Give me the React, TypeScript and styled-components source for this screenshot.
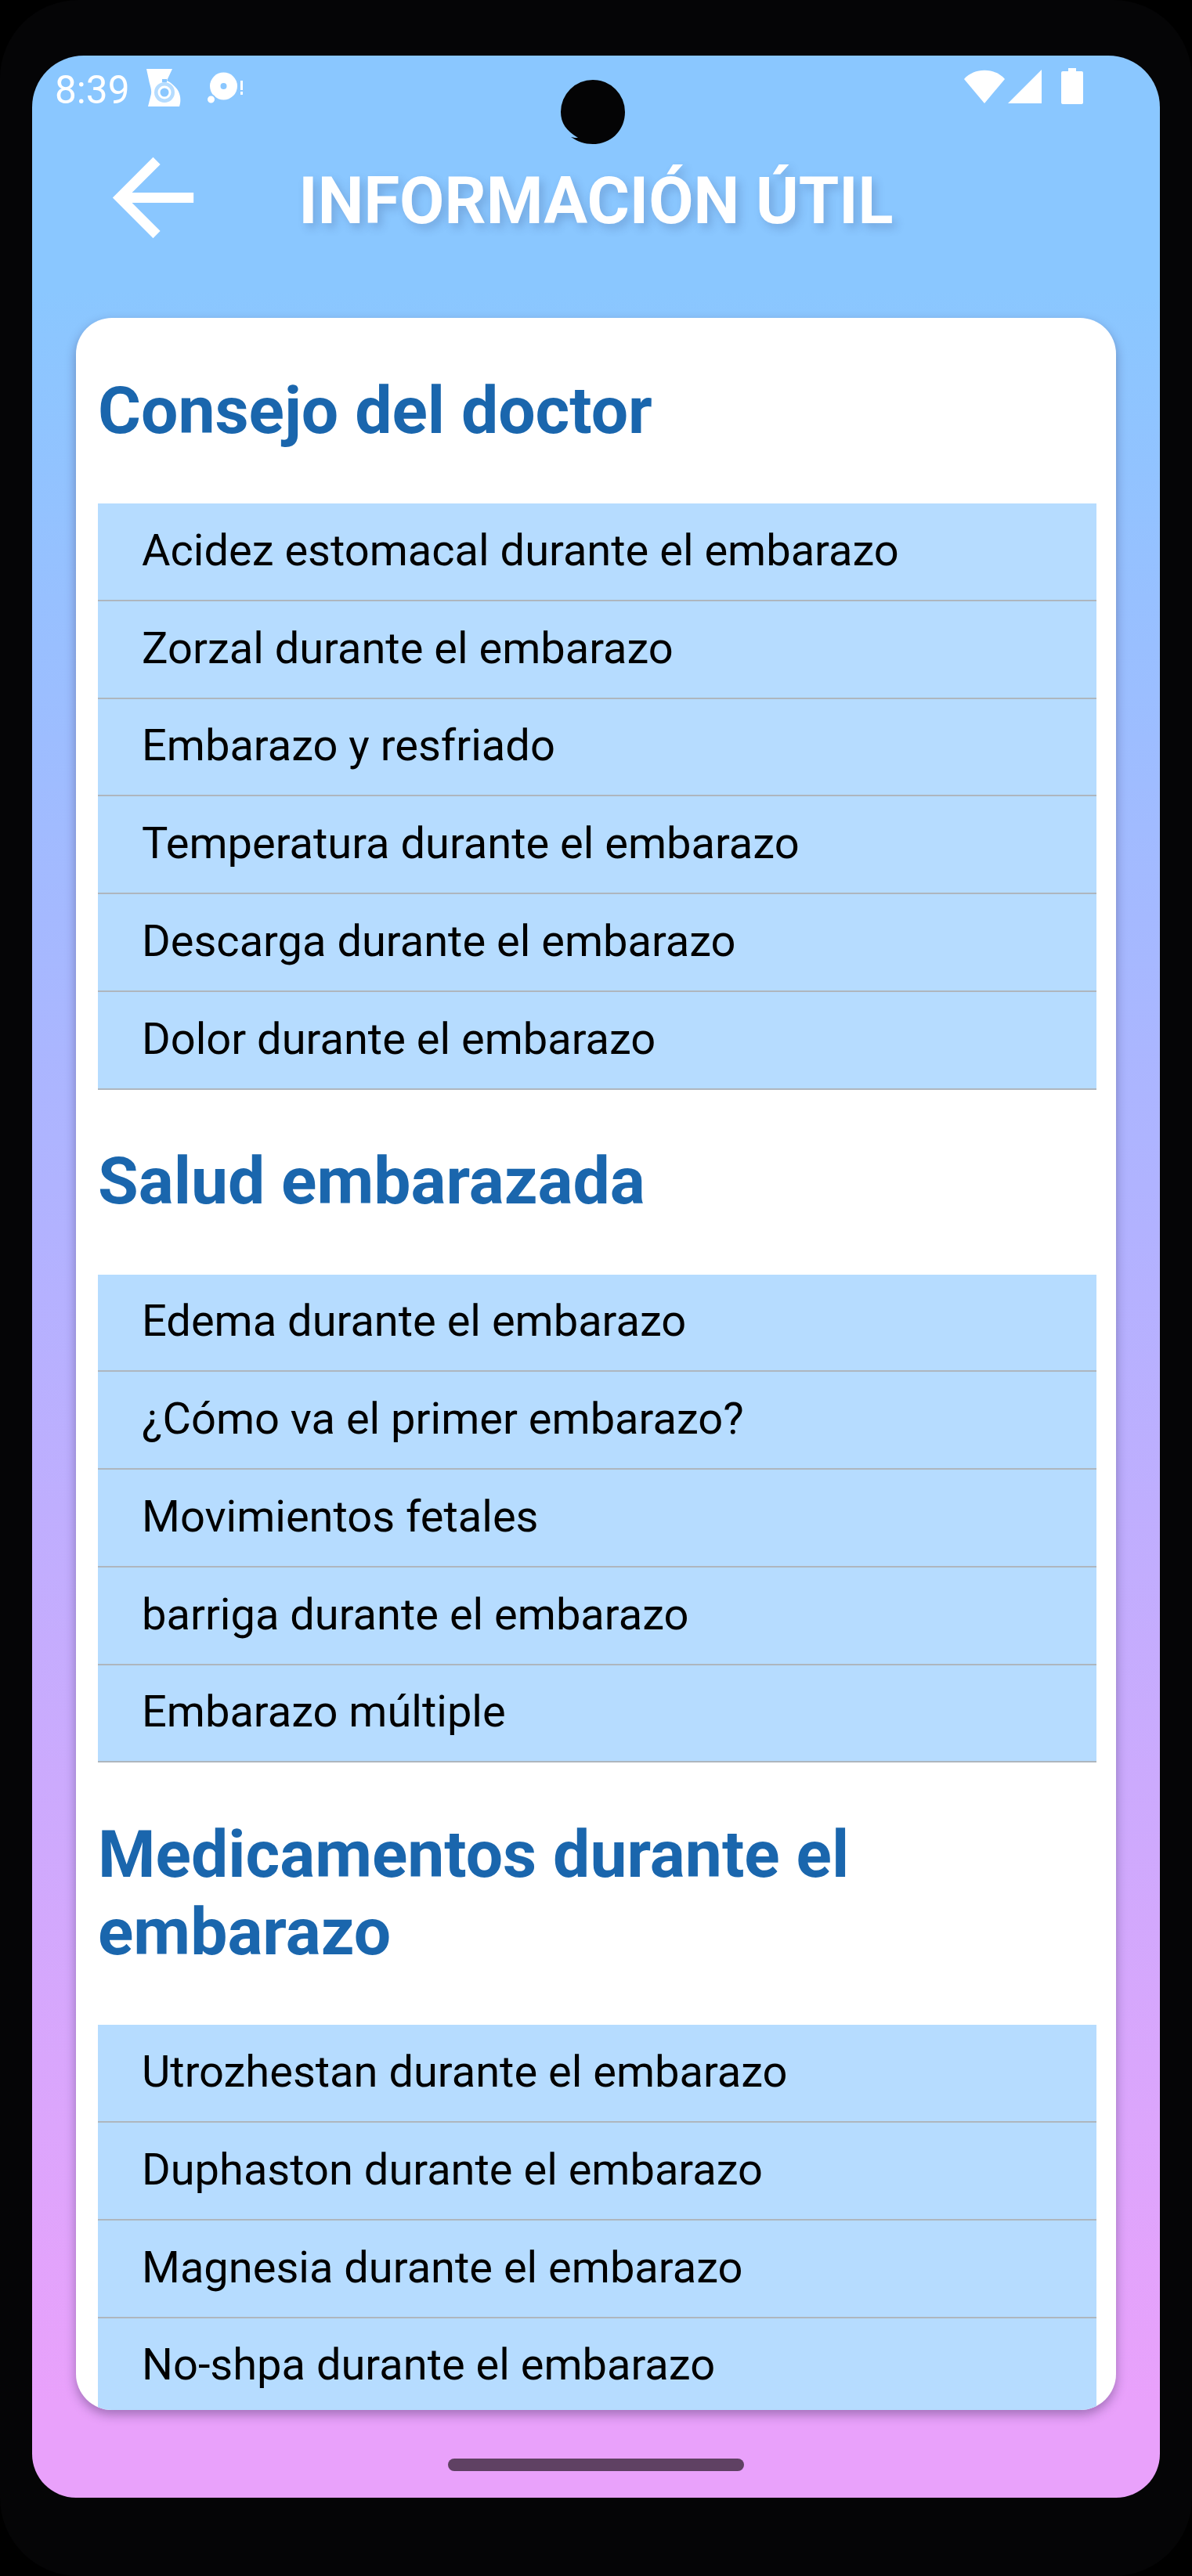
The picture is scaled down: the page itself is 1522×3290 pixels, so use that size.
import React from "react";
import styled, { createGlobalStyle } from "styled-components";

const sections = [
  {
    title: "Consejo del doctor",
    items: [
      "Acidez estomacal durante el embarazo",
      "Zorzal durante el embarazo",
      "Embarazo y resfriado",
      "Temperatura durante el embarazo",
      "Descarga durante el embarazo",
      "Dolor durante el embarazo",
    ],
  },
  {
    title: "Salud embarazada",
    items: [
      "Edema durante el embarazo",
      "¿Cómo va el primer embarazo?",
      "Movimientos fetales",
      "barriga durante el embarazo",
      "Embarazo múltiple",
    ],
  },
  {
    title: "Medicamentos durante el embarazo",
    items: [
      "Utrozhestan durante el embarazo",
      "Duphaston durante el embarazo",
      "Magnesia durante el embarazo",
      "No-shpa durante el embarazo",
    ],
  },
];

const App: React.FC = () => (
  <>
    <GlobalStyle />
    <Frame>
      <Screen>
        <Camera viewBox="0 0 84 84">
          <path d="M42 0a41 41 0 0 1 41 41c0 24-18 41-41 41-11 0-19-3-28-9 4 1 6 1 9 1C8 65 1 55 1 41A41 41 0 0 1 42 0z" />
        </Camera>
        <StatusBar>
          <StatusGroup>
            <Clock>8:39</Clock>
            <StatusIcon width="46" height="50" viewBox="0 0 46 50">
              <path d="M0 1h33l-7 15c5 2 13 9 15 14 3 7 3 13 1 19H2l4-16c1-6-2-12-3-18z" />
              <circle cx="23" cy="31" r="13" fill="#b5dcff" />
              <circle cx="23" cy="31" r="7" fill="#8ac7ff" stroke="#fff" strokeWidth="3" />
              <rect x="20" y="14" width="6" height="4" fill="#8ac7ff" />
            </StatusIcon>
            <DiscIcon width="50" height="46" viewBox="0 0 50 46">
              <path
                fillRule="evenodd"
                d="M20.500 3.500a17.500 17.500 0 1 1 0 35 17.500 17.500 0 0 1 0-35zm0 13.500a4 4 0 1 0 0 8 4 4 0 0 0 0-8z"
              />
              <circle cx="4.500" cy="38" r="5.500" stroke="#8ac7ff" strokeWidth="2" />
              <rect x="42" y="14" width="3" height="12" />
              <rect x="42" y="28" width="3" height="4" />
            </DiscIcon>
          </StatusGroup>
          <StatusGroup>
            <StatusIcon width="54" height="46" viewBox="0 0 54 46">
              <path d="M1 14C14 -1 40 -1 53 14L27 45z" />
            </StatusIcon>
            <SignalIcon width="44" height="46" viewBox="0 0 44 46">
              <path d="M44 2v43H1z" />
            </SignalIcon>
            <BatteryIcon width="28" height="46" viewBox="0 0 28 46">
              <path d="M9 0h10v4h7a2 2 0 0 1 2 2v38a2 2 0 0 1-2 2H2a2 2 0 0 1-2-2V6a2 2 0 0 1 2-2h7z" />
            </BatteryIcon>
          </StatusGroup>
        </StatusBar>
        <Header>
          <BackIcon viewBox="0 0 24 24">
            <path d="M20 11H7.830l5.590-5.590L12 4l-8 8 8 8 1.410-1.410L7.830 13H20v-2z" />
          </BackIcon>
          <Title>INFORMACIÓN ÚTIL</Title>
        </Header>
        <Card>
          {sections.map((section) => (
            <section key={section.title}>
              <SectionTitle>{section.title}</SectionTitle>
              <List>
                {section.items.map((item) => (
                  <Row key={item}>{item}</Row>
                ))}
              </List>
            </section>
          ))}
        </Card>
        <Footer>
          <HomeBar />
        </Footer>
      </Screen>
    </Frame>
  </>
);

const GlobalStyle = createGlobalStyle`
  html, body {
    margin: 0;
    padding: 0;
    background: #000;
  }
`;

const Frame = styled.div`
  width: 1522px;
  height: 3290px;
  padding: 71px 41px 100px;
  box-sizing: border-box;
  background: #050506;
  border-radius: 100px;
  font-family: Roboto, "Liberation Sans", sans-serif;
`;

const Screen = styled.div`
  position: relative;
  display: flex;
  flex-direction: column;
  height: 3119px;
  overflow: hidden;
  border-radius: 66px 66px 56px 56px;
  background: linear-gradient(180deg, #8ac7ff 0, #8ac7ff 300px, #b2b2ff 1500px, #e9a1fb 3000px);
`;

const Camera = styled.svg`
  position: absolute;
  top: 31px;
  left: 674px;
  width: 84px;
  height: 84px;
  fill: #040405;
`;

const StatusBar = styled.div`
  display: flex;
  justify-content: space-between;
  align-items: flex-start;
  height: 104px;
  padding: 16px 98px 0 29px;
  box-sizing: border-box;
`;

const StatusGroup = styled.div`
  display: flex;
  align-items: flex-start;
`;

const Clock = styled.span`
  width: 117px;
  margin-top: 4px;
  font-size: 49.5px;
  line-height: 48px;
  color: #fff;
  font-weight: 400;
`;

const StatusIcon = styled.svg`
  fill: #fff;
  display: block;
`;

const DiscIcon = styled(StatusIcon)`
  margin-left: 32px;
  margin-top: 2px;
`;

const SignalIcon = styled(StatusIcon)`
  margin-left: 2px;
`;

const BatteryIcon = styled(StatusIcon)`
  margin-left: 25px;
`;

const Header = styled.header`
  display: grid;
  grid-template-columns: 1fr auto 1fr;
  align-items: center;
  height: 155px;
  margin-bottom: 76px;
`;

const BackIcon = styled.svg`
  width: 155px;
  height: 155px;
  margin-left: 77px;
  fill: #fff;
`;

const Title = styled.h1`
  margin: 8px 0 0;
  font-size: 83.2px;
  line-height: 98px;
  font-weight: 700;
  color: #fff;
  text-shadow: 5px 6px 12px rgba(40, 60, 110, 0.22);
`;

const Card = styled.main`
  flex: 1;
  min-height: 0;
  margin: 0 56px;
  padding: 1px 25px 0 28px;
  overflow: hidden;
  background: #fff;
  border-radius: 46px;
  box-shadow: 0 6px 14px rgba(30, 20, 60, 0.35);
`;

const SectionTitle = styled.h2`
  margin: 0;
  padding: 67.5px 0 69.5px;
  font-size: 84px;
  line-height: 99px;
  font-weight: 700;
  color: #1a66ad;
`;

const List = styled.ul`
  margin: 0;
  padding: 0;
  list-style: none;
  background: #b6dcff;
`;

const Row = styled.li`
  display: flex;
  align-items: center;
  height: 124.75px;
  padding: 0 0 3px 56px;
  box-sizing: border-box;
  border-bottom: 2px solid #aeb6be;
  font-size: 56px;
  color: #000;
`;

const Footer = styled.footer`
  height: 112px;
  padding-top: 62px;
  box-sizing: border-box;
`;

const HomeBar = styled.div`
  width: 378px;
  height: 16px;
  margin: 0 auto;
  border-radius: 8px;
  background: #5f4163;
`;

export default App;
